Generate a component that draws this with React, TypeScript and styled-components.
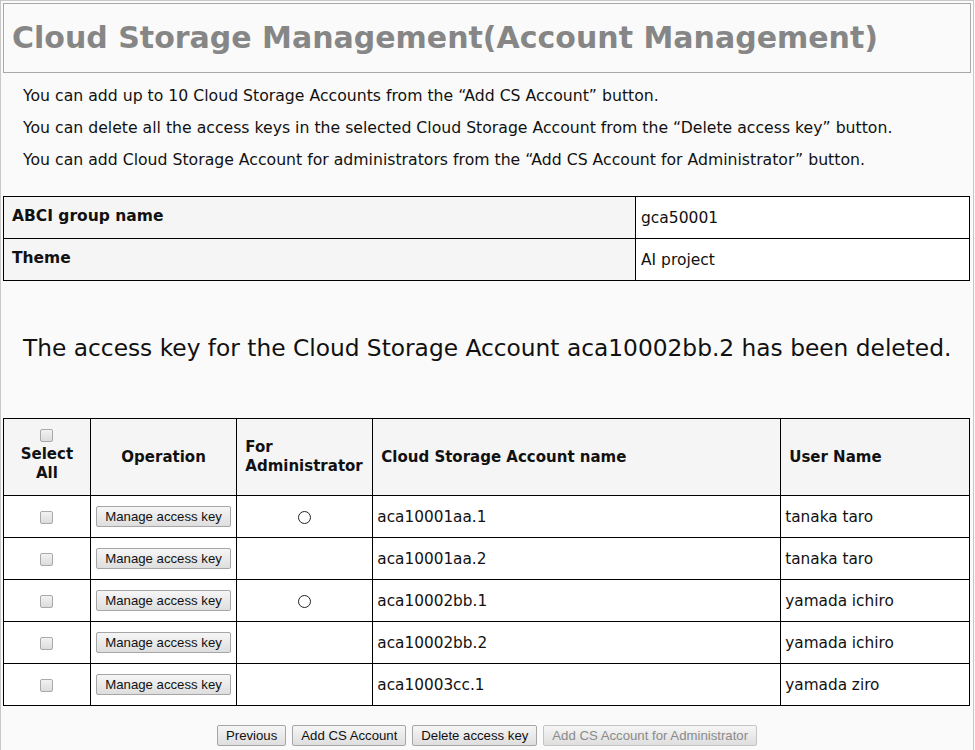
import styled, { createGlobalStyle } from "styled-components";

const GlobalStyle = createGlobalStyle`
	html, body {
		margin: 0;
		padding: 0;
		background: #fafafa;
	}
	body {
		font-family: "DejaVu Sans", Verdana, sans-serif;
		color: #111;
	}
`;

const Page = styled.div`
	width: 974px;
	min-height: 760px;
	border-left: 1px solid #c8c8c8;
	border-right: 1px solid #c8c8c8;
	border-top: 1px solid #c8c8c8;
	padding: 2px 2px 0 2px;
	box-sizing: border-box;
	background: #fafafa;
`;

const TitleBox = styled.div`
	border: 1px solid #a8a8a8;
	height: 70px;
	width: 968px;
	box-sizing: border-box;
	display: flex;
	align-items: center;
	padding-left: 8px;
	padding-bottom: 2px;
`;

const Title = styled.h1`
	margin: 0;
	font-size: 30px;
	font-weight: bold;
	color: #868686;
	white-space: nowrap;
`;

const Notes = styled.div`
	padding: 7px 0 0 20px;
	font-size: 15.7px;
	line-height: 32px;
	color: #111;
	white-space: nowrap;
`;

const InfoTable = styled.table`
	margin-top: 20px;
	width: 967px;
	border-collapse: collapse;
	font-size: 15.5px;
`;

const InfoHead = styled.th`
	width: 615px;
	height: 31px;
	background: #f5f5f5;
	border: 1px solid #000;
	text-align: left;
	vertical-align: top;
	padding: 10px 8px 0;
	font-weight: bold;
`;

const InfoCell = styled.td`
	background: #fff;
	border: 1px solid #000;
	padding: 0 5px;
	vertical-align: middle;
`;

const Message = styled.div`
	height: 137px;
	box-sizing: border-box;
	padding: 0 0 5px 20px;
	display: flex;
	align-items: center;
	font-size: 23.3px;
	color: #111;
	white-space: nowrap;
`;

const MainTable = styled.table`
	width: 967px;
	border-collapse: collapse;
	font-size: 15px;
`;

const Th = styled.th<{ $w: number; $align?: string }>`
	width: ${(p) => p.$w}px;
	height: 76px;
	background: #f5f5f5;
	border: 1px solid #000;
	text-align: ${(p) => p.$align || "center"};
	padding: 0 8px;
	font-size: 15px;
	font-weight: bold;
	line-height: 19px;
`;

const Td = styled.td<{ $align?: string }>`
	height: 41px;
	background: #fff;
	border: 1px solid #000;
	text-align: ${(p) => p.$align || "center"};
	padding: 0 4px;
	font-size: 15.3px;
`;

const Check = styled.span`
	display: inline-block;
	width: 11px;
	height: 11px;
	border: 1px solid #a9a9a9;
	border-radius: 2px;
	background: linear-gradient(#f2f2f2, #dcdcdc);
	vertical-align: middle;
`;

const SelectAll = styled.div`
	display: flex;
	flex-direction: column;
	align-items: center;
	gap: 3px;
	margin-top: -3px;
`;

const Button = styled.button<{ $disabled?: boolean }>`
	font-family: "Liberation Sans", Arial, sans-serif;
	font-size: 13.2px;
	height: 21px;
	padding: 0 8px;
	border: 1px solid ${(p) => (p.$disabled ? "#c4c4c4" : "#a6a6a6")};
	border-radius: 2px;
	background: linear-gradient(#f6f6f6, #dedede);
	color: ${(p) => (p.$disabled ? "#8a8a8a" : "#111")};
	cursor: default;
	vertical-align: middle;
`;

const Circle = styled.span`
	display: inline-block;
	width: 11px;
	height: 11px;
	border: 1px solid #222;
	border-radius: 50%;
	vertical-align: middle;
`;

const Footer = styled.div`
	display: flex;
	justify-content: center;
	gap: 6px;
	padding-top: 19px;
`;

const rows = [
	{ admin: true, name: "aca10001aa.1", user: "tanaka taro" },
	{ admin: false, name: "aca10001aa.2", user: "tanaka taro" },
	{ admin: true, name: "aca10002bb.1", user: "yamada ichiro" },
	{ admin: false, name: "aca10002bb.2", user: "yamada ichiro" },
	{ admin: false, name: "aca10003cc.1", user: "yamada ziro" },
];

const App = () => {
	return (
		<Page>
			<GlobalStyle />
			<TitleBox>
				<Title>Cloud Storage Management(Account Management)</Title>
			</TitleBox>
			<Notes>
				<div>You can add up to 10 Cloud Storage Accounts from the “Add CS Account” button.</div>
				<div>You can delete all the access keys in the selected Cloud Storage Account from the “Delete access key” button.</div>
				<div>You can add Cloud Storage Account for administrators from the “Add CS Account for Administrator” button.</div>
			</Notes>
			<InfoTable>
				<tbody>
					<tr>
						<InfoHead>ABCI group name</InfoHead>
						<InfoCell>gca50001</InfoCell>
					</tr>
					<tr>
						<InfoHead>Theme</InfoHead>
						<InfoCell>AI project</InfoCell>
					</tr>
				</tbody>
			</InfoTable>
			<Message>The access key for the Cloud Storage Account aca10002bb.2 has been deleted.</Message>
			<MainTable>
				<thead>
					<tr>
						<Th $w={70}>
							<SelectAll>
								<Check />
								<span>Select All</span>
							</SelectAll>
						</Th>
						<Th $w={130}>Operation</Th>
						<Th $w={119} $align="left">For Administrator</Th>
						<Th $w={394} $align="left">Cloud Storage Account name</Th>
						<Th $w={173} $align="left">User Name</Th>
					</tr>
				</thead>
				<tbody>
					{rows.map((r) => (
						<tr key={r.name}>
							<Td><Check /></Td>
							<Td><Button>Manage access key</Button></Td>
							<Td>{r.admin && <Circle />}</Td>
							<Td $align="left">{r.name}</Td>
							<Td $align="left">{r.user}</Td>
						</tr>
					))}
				</tbody>
			</MainTable>
			<Footer>
				<Button>Previous</Button>
				<Button>Add CS Account</Button>
				<Button>Delete access key</Button>
				<Button $disabled>Add CS Account for Administrator</Button>
			</Footer>
		</Page>
	);
};

export default App;
